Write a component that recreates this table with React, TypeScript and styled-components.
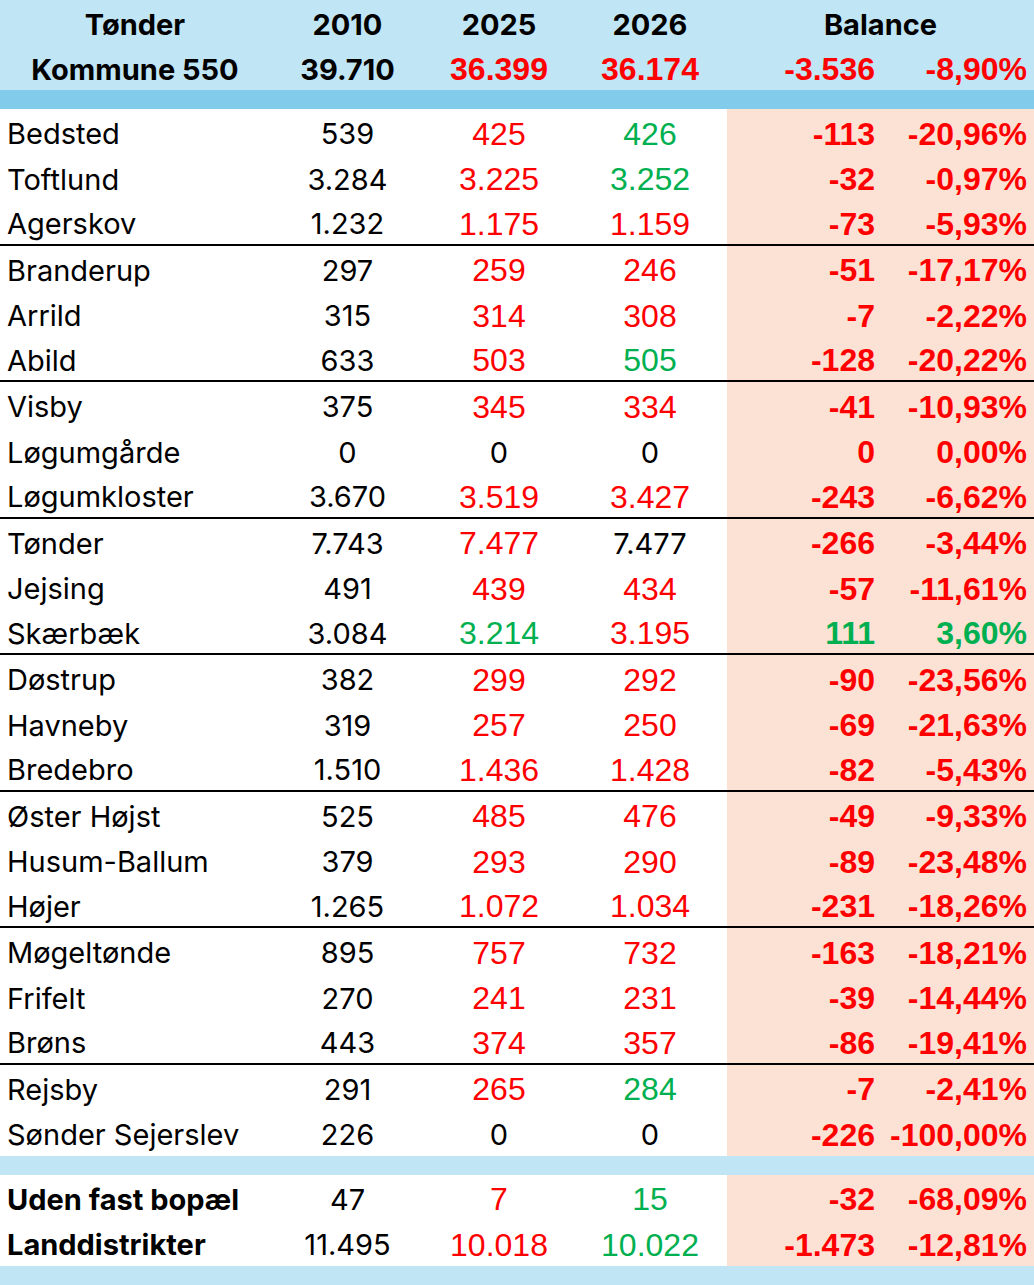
import React from "react";
import styled, { createGlobalStyle, css } from "styled-components";

type Tone = "k" | "r" | "g";
type Val = [string, Tone];

interface Place {
    name: string;
    y2010: string;
    y2025: Val;
    y2026: Val;
    diff: Val;
    pct: Val;
    sep?: boolean;
    strong?: boolean;
}

const r = (v: string): Val => [v, "r"];
const g = (v: string): Val => [v, "g"];
const k = (v: string): Val => [v, "k"];

const places: Place[] = [
    { name: "Bedsted", y2010: "539", y2025: r("425"), y2026: g("426"), diff: r("-113"), pct: r("-20,96%") },
    { name: "Toftlund", y2010: "3.284", y2025: r("3.225"), y2026: g("3.252"), diff: r("-32"), pct: r("-0,97%") },
    { name: "Agerskov", y2010: "1.232", y2025: r("1.175"), y2026: r("1.159"), diff: r("-73"), pct: r("-5,93%"), sep: true },
    { name: "Branderup", y2010: "297", y2025: r("259"), y2026: r("246"), diff: r("-51"), pct: r("-17,17%") },
    { name: "Arrild", y2010: "315", y2025: r("314"), y2026: r("308"), diff: r("-7"), pct: r("-2,22%") },
    { name: "Abild", y2010: "633", y2025: r("503"), y2026: g("505"), diff: r("-128"), pct: r("-20,22%"), sep: true },
    { name: "Visby", y2010: "375", y2025: r("345"), y2026: r("334"), diff: r("-41"), pct: r("-10,93%") },
    { name: "Løgumgårde", y2010: "0", y2025: k("0"), y2026: k("0"), diff: r("0"), pct: r("0,00%") },
    { name: "Løgumkloster", y2010: "3.670", y2025: r("3.519"), y2026: r("3.427"), diff: r("-243"), pct: r("-6,62%"), sep: true },
    { name: "Tønder", y2010: "7.743", y2025: r("7.477"), y2026: k("7.477"), diff: r("-266"), pct: r("-3,44%") },
    { name: "Jejsing", y2010: "491", y2025: r("439"), y2026: r("434"), diff: r("-57"), pct: r("-11,61%") },
    { name: "Skærbæk", y2010: "3.084", y2025: g("3.214"), y2026: r("3.195"), diff: g("111"), pct: g("3,60%"), sep: true },
    { name: "Døstrup", y2010: "382", y2025: r("299"), y2026: r("292"), diff: r("-90"), pct: r("-23,56%") },
    { name: "Havneby", y2010: "319", y2025: r("257"), y2026: r("250"), diff: r("-69"), pct: r("-21,63%") },
    { name: "Bredebro", y2010: "1.510", y2025: r("1.436"), y2026: r("1.428"), diff: r("-82"), pct: r("-5,43%"), sep: true },
    { name: "Øster Højst", y2010: "525", y2025: r("485"), y2026: r("476"), diff: r("-49"), pct: r("-9,33%") },
    { name: "Husum-Ballum", y2010: "379", y2025: r("293"), y2026: r("290"), diff: r("-89"), pct: r("-23,48%") },
    { name: "Højer", y2010: "1.265", y2025: r("1.072"), y2026: r("1.034"), diff: r("-231"), pct: r("-18,26%"), sep: true },
    { name: "Møgeltønde", y2010: "895", y2025: r("757"), y2026: r("732"), diff: r("-163"), pct: r("-18,21%") },
    { name: "Frifelt", y2010: "270", y2025: r("241"), y2026: r("231"), diff: r("-39"), pct: r("-14,44%") },
    { name: "Brøns", y2010: "443", y2025: r("374"), y2026: r("357"), diff: r("-86"), pct: r("-19,41%"), sep: true },
    { name: "Rejsby", y2010: "291", y2025: r("265"), y2026: g("284"), diff: r("-7"), pct: r("-2,41%") },
    { name: "Sønder Sejerslev", y2010: "226", y2025: k("0"), y2026: k("0"), diff: r("-226"), pct: r("-100,00%") },
];

const totals: Place[] = [
    { name: "Uden fast bopæl", y2010: "47", y2025: r("7"), y2026: g("15"), diff: r("-32"), pct: r("-68,09%"), strong: true },
    { name: "Landdistrikter", y2010: "11.495", y2025: r("10.018"), y2026: g("10.022"), diff: r("-1.473"), pct: r("-12,81%"), strong: true },
];

const toneColor: Record<Tone, string> = {
    k: "#000000",
    r: "#ff0000",
    g: "#00b050",
};

const GlobalStyle = createGlobalStyle`
    html, body {
        margin: 0;
        padding: 0;
        background: #ffffff;
    }
    body {
        font-family: Inter, "Noto Sans", sans-serif;
    }
`;

const Sheet = styled.div`
    width: 1034px;
    display: flex;
    flex-direction: column;
`;

const cols = "270px 155px 148px 154px 153px 154px";

const HeadRow = styled.div`
    display: grid;
    grid-template-columns: ${cols};
    height: 45px;
    align-items: center;
    padding-top: 3px;
    box-sizing: border-box;
    background: #c0e5f5;
`;

const Band = styled.div<{ $h: number; $dark?: boolean }>`
    height: ${({ $h }) => $h}px;
    background: ${({ $dark }) => ($dark ? "#83cbeb" : "#c0e5f5")};
`;

const Row = styled.div<{ $sep?: boolean }>`
    display: grid;
    grid-template-columns: ${cols};
    height: 45.5px;
    box-sizing: border-box;
    ${({ $sep }) =>
        $sep &&
        css`
            border-bottom: 2px solid #000000;
        `}
`;

const Cell = styled.div<{ $align?: "left" | "center" | "right"; $tone?: Tone; $bold?: boolean; $arial?: boolean; $shade?: boolean; $pad?: number }>`
    display: flex;
    align-items: center;
    justify-content: ${({ $align }) =>
        $align === "left" ? "flex-start" : $align === "right" ? "flex-end" : "center"};
    padding: ${({ $arial }) => ($arial ? 5 : 4)}px ${({ $pad }) => $pad ?? 0}px 0
        ${({ $align }) => ($align === "left" ? 7 : 0)}px;
    box-sizing: border-box;
    font-family: ${({ $arial }) =>
        $arial ? `"Liberation Sans", Arial, sans-serif` : `Inter, "Noto Sans", sans-serif`};
    font-size: ${({ $arial }) => ($arial ? 32 : 29)}px;
    font-weight: ${({ $bold }) => ($bold ? 700 : 400)};
    color: ${({ $tone }) => toneColor[$tone ?? "k"]};
    background: ${({ $shade }) => ($shade ? "#fbe2d5" : "transparent")};
    white-space: nowrap;
`;

const HeadCell = styled(Cell)`
    padding-top: 0;
`;

const BalanceHead = styled(HeadCell)`
    grid-column: span 2;
`;

const ValueCell: React.FC<{ v: Val }> = ({ v }) => (
    <Cell $tone={v[1]} $arial={v[1] !== "k"}>
        {v[0]}
    </Cell>
);

const PlaceRow: React.FC<{ p: Place }> = ({ p }) => (
    <Row $sep={p.sep}>
        <Cell $align="left" $bold={p.strong}>
            {p.name}
        </Cell>
        <Cell>{p.y2010}</Cell>
        <ValueCell v={p.y2025} />
        <ValueCell v={p.y2026} />
        <Cell $align="right" $pad={5} $tone={p.diff[1]} $bold $arial $shade>
            {p.diff[0]}
        </Cell>
        <Cell $align="right" $pad={7} $tone={p.pct[1]} $bold $arial $shade>
            {p.pct[0]}
        </Cell>
    </Row>
);

const App: React.FC = () => (
    <>
        <GlobalStyle />
        <Sheet>
            <HeadRow>
                <HeadCell $bold>Tønder</HeadCell>
                <HeadCell $bold>2010</HeadCell>
                <HeadCell $bold>2025</HeadCell>
                <HeadCell $bold>2026</HeadCell>
                <BalanceHead $bold>Balance</BalanceHead>
            </HeadRow>
            <HeadRow>
                <HeadCell $bold>Kommune 550</HeadCell>
                <HeadCell $bold>39.710</HeadCell>
                <HeadCell $bold $arial $tone="r">
                    36.399
                </HeadCell>
                <HeadCell $bold $arial $tone="r">
                    36.174
                </HeadCell>
                <HeadCell $align="right" $pad={5} $bold $arial $tone="r">
                    -3.536
                </HeadCell>
                <HeadCell $align="right" $pad={7} $bold $arial $tone="r">
                    -8,90%
                </HeadCell>
            </HeadRow>
            <Band $h={19} $dark />
            {places.map((p) => (
                <PlaceRow key={p.name} p={p} />
            ))}
            <Band $h={19} />
            {totals.map((p) => (
                <PlaceRow key={p.name} p={p} />
            ))}
            <Band $h={21} />
        </Sheet>
    </>
);

export default App;
